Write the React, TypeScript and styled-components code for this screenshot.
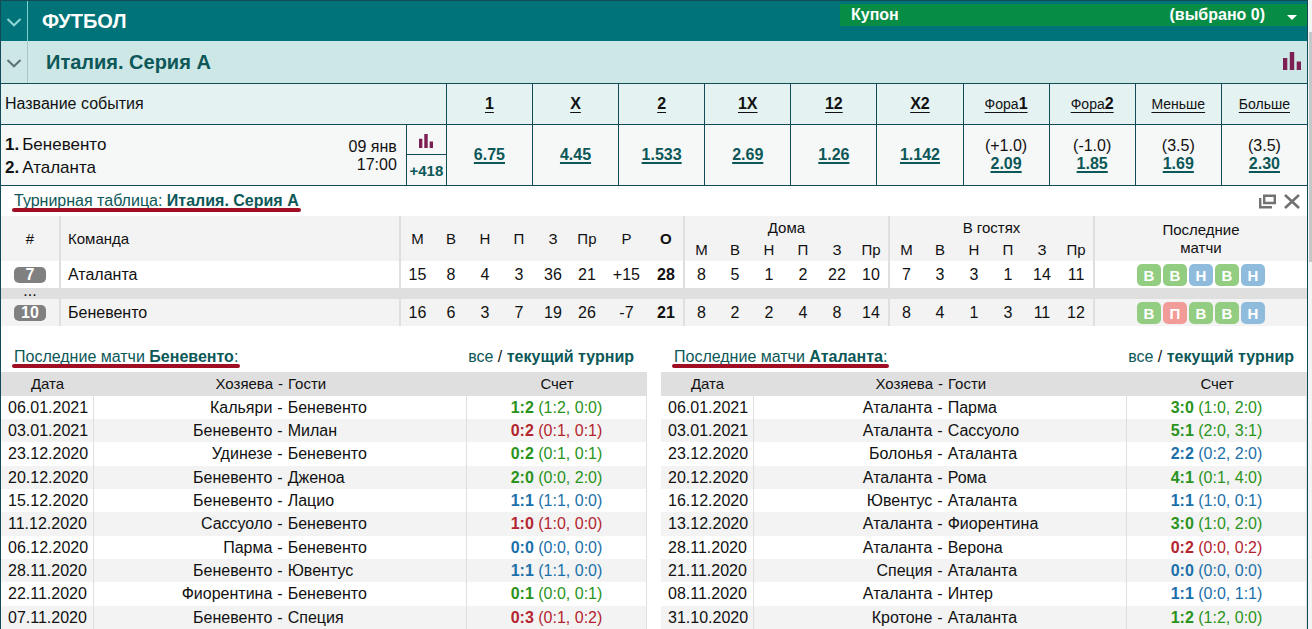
import React from "react";
import styled, { createGlobalStyle } from "styled-components";

const c = {
  line: "#124a58",
  head: "#007378",
  league: "#cde6e6",
  pale: "#e4f2f2",
  teal: "#0c5757",
  plum: "#7c1f52",
  stripe: "#f3f3f3",
  band: "#dfdfdf",
  win: "#2a931c",
  loss: "#b3252f",
  draw: "#1b70a9",
  mark: "#a00e24",
};

const GlobalStyle = createGlobalStyle`
  *, *::before, *::after { box-sizing: border-box; }
  body {
    margin: 0;
    background: #fff;
    color: #111;
    font: 16px/18px "Liberation Sans", Arial, sans-serif;
  }
  button {
    font: inherit;
    color: inherit;
    background: none;
    border: 0;
    padding: 0;
    cursor: pointer;
  }
  a { color: inherit; text-decoration: none; }
  h1, h2, h3 { margin: 0; font-size: inherit; font-weight: normal; }
  svg { display: block; }
`;

const Page = styled.div`
  display: flex;
  min-height: 100vh;
`;

const Frame = styled.main`
  flex: 1;
  min-width: 0;
  border: solid ${c.line};
  border-width: 1px 1px 0 1px;
`;

const ScrollTrack = styled.div`
  width: 4px;
  padding: 32px 0 0 1px;
  background: #f1f5f5;
`;

const ScrollThumb = styled.div`
  height: 230px;
  background: #c3c9c9;
`;

const SportBar = styled.header`
  display: flex;
  height: 40px;
  background: ${c.head};
  color: #fff;
`;

const LeagueBar = styled.div`
  display: flex;
  align-items: center;
  height: 43px;
  background: ${c.league};
  border-bottom: 1px solid ${c.line};
  color: ${c.plum};
`;

const Toggle = styled.button<{ $edge: string; $ink: string }>`
  && {
    display: flex;
    align-items: center;
    justify-content: center;
    align-self: stretch;
    width: 27px;
    padding-top: 3px;
    border-right: 1px solid ${(p) => p.$edge};
    color: ${(p) => p.$ink};
  }
`;

const SportTitle = styled.h1`
  && {
    flex: 1;
    padding-left: 14px;
    font-size: 20px;
    font-weight: bold;
    line-height: 40px;
  }
`;

const LeagueTitle = styled.h2`
  && {
    flex: 1;
    padding-left: 18px;
    font-size: 20px;
    font-weight: bold;
    line-height: 42px;
    color: ${c.teal};
  }
`;

const LeagueStats = styled.button`
  && { padding: 0 6px 2px 0; }
`;

const Coupon = styled.button`
  && {
    display: flex;
    align-items: center;
    align-self: flex-start;
    gap: 22px;
    width: 467px;
    height: 22px;
    margin-top: 3px;
    padding: 0 10px 0 11px;
    background: #078c45;
    font-weight: bold;
  }
  svg { margin-top: 4px; }
`;

const CouponName = styled.span`
  flex: 1;
  text-align: left;
`;

const OddsTable = styled.table`
  width: 100%;
  table-layout: fixed;
  border-spacing: 0;
  text-align: center;
  th, td {
    padding: 0;
    border-bottom: 1px solid ${c.line};
  }
  th + th, td + td { border-left: 1px solid ${c.line}; }
  th { height: 41px; background: ${c.pale}; font-weight: normal; }
  td { height: 61px; background: #f6f7f7; }
  th:first-child { padding-left: 4px; text-align: left; }
`;

const Col = styled.col<{ $w: string }>`
  width: ${(p) => p.$w};
`;

const SortLink = styled.button`
  && {
    font-size: 14px;
    text-decoration: underline;
    text-underline-offset: 3px;
    b { font-size: 16px; }
  }
`;

const EventCell = styled.div`
  display: flex;
  align-items: center;
  justify-content: space-between;
  padding: 2px 9px 0 4px;
`;

const Team = styled.div`
  display: flex;
  gap: 3px;
  font-size: 17px;
  line-height: 23px;
`;

const When = styled.div`
  text-align: right;
`;

const MoreCell = styled.div`
  display: grid;
  grid-template-rows: 30px 30px;
`;

const StatsButton = styled.button`
  && {
    display: flex;
    align-items: center;
    justify-content: center;
    padding-top: 3px;
    border-bottom: 1px solid ${c.line};
    color: ${c.plum};
  }
`;

const MoreLink = styled.a`
  && {
    font-size: 15px;
    font-weight: bold;
    line-height: 32px;
    color: ${c.teal};
  }
`;

const OddLink = styled.a`
  && {
    font-weight: bold;
    color: ${c.teal};
    text-decoration: underline 2px;
    text-underline-offset: 2px;
  }
`;

const PanelHead = styled.div`
  display: flex;
  align-items: center;
  height: 30px;
  padding: 0 7px 0 13px;
`;

const Marked = styled.h3`
  && {
    position: relative;
    margin-right: auto;
    color: ${c.teal};
  }
  &::after {
    content: "";
    position: absolute;
    left: -2px;
    right: -2px;
    bottom: -2px;
    height: 4px;
    border-radius: 2px;
    background: ${c.mark};
  }
`;

const Tools = styled.div`
  display: flex;
  gap: 8px;
  color: #727272;
`;

const Standings = styled.table`
  width: 100%;
  table-layout: fixed;
  border-spacing: 0;
  text-align: center;
  th, td { padding: 0; }
  th { font-size: 15px; font-weight: normal; }
`;

const HeadRow = styled.tr<{ $h: number }>`
  height: ${(p) => p.$h}px;
  background: ${c.stripe};
`;

const TeamRow = styled.tr<{ $shade?: boolean }>`
  height: 27px;
  background: ${(p) => (p.$shade ? c.stripe : "#fff")};
`;

const GapRow = styled.tr`
  height: 11px;
  background: ${c.band};
  line-height: 6px;
  vertical-align: top;
`;

const Th = styled.th<{ $rule?: boolean; $left?: boolean }>`
  border-left: ${(p) => (p.$rule ? `2px solid ${c.band}` : "0")};
  ${(p) => p.$left && "&&& { padding-left: 7px; text-align: left; }"}
`;

const Td = styled.td<{ $rule?: boolean; $left?: boolean }>`
  border-left: ${(p) => (p.$rule ? `2px solid ${c.band}` : "0")};
  ${(p) => p.$left && "&&& { padding-left: 7px; text-align: left; }"}
`;

const Rank = styled.span`
  display: block;
  width: 32px;
  height: 16px;
  margin: 0 auto;
  border-radius: 5px;
  background: #808080;
  color: #fff;
  font-weight: bold;
  line-height: 16px;
`;

const Form = styled.div`
  display: flex;
  justify-content: center;
  gap: 2px;
`;

const formColor: Record<string, string> = { В: "#93cd82", Н: "#8fbbdd", П: "#f19c98" };

const FormBadge = styled.span<{ $r: string }>`
  width: 24px;
  height: 22px;
  border-radius: 5px;
  background: ${(p) => formColor[p.$r]};
  color: #fff;
  font-size: 15px;
  font-weight: bold;
  line-height: 23px;
`;

const Columns = styled.div`
  display: grid;
  grid-template-columns: 1fr 1fr;
  gap: 14px;
  padding-top: 16px;
`;

const Filter = styled.nav`
  padding-right: 6px;
  a { color: ${c.teal}; }
`;

const Matches = styled.table`
  width: 100%;
  table-layout: fixed;
  border-spacing: 0;
  th, td { padding: 0; }
  thead tr { height: 24px; background: ${c.band}; }
  th { font-size: 15px; font-weight: normal; }
  tbody tr { height: 23px; }
  tbody tr:nth-child(3n) { height: 24px; }
  tbody tr:nth-child(even) { background: ${c.stripe}; }
  td { border-right: 1px solid ${c.band}; }
  td:first-child { padding-left: 7px; }
`;

const Pair = styled.div`
  display: grid;
  grid-template-columns: 1fr auto 1fr;
  gap: 5px;
  > :first-child { text-align: right; }
  > :last-child { text-align: left; }
`;

const Score = styled.div<{ $tone: Tone }>`
  text-align: center;
  color: ${(p) => c[p.$tone]};
`;

type Tone = "win" | "loss" | "draw";
type Match = [string, string, string, string, string, Tone];

const Chevron = () => (
  <svg width="16" height="9" viewBox="0 0 16 9" fill="none" stroke="currentColor" strokeWidth="2" aria-hidden="true">
    <path d="M1.5 1 8 7.3 14.5 1" />
  </svg>
);

const Bars = ({ size }: { size: number }) => (
  <svg width={size} height={size} viewBox="0 0 18 18" fill="currentColor" aria-hidden="true">
    <path d="M0 6h4.3v12H0zM6.8 0h4.4v18H6.8zM13.7 9.5H18V18h-4.3z" />
  </svg>
);

const odds: { key: string; head: React.ReactNode; line?: string; value: string }[] = [
  { key: "1", head: <b>1</b>, value: "6.75" },
  { key: "X", head: <b>X</b>, value: "4.45" },
  { key: "2", head: <b>2</b>, value: "1.533" },
  { key: "1X", head: <b>1X</b>, value: "2.69" },
  { key: "12", head: <b>12</b>, value: "1.26" },
  { key: "X2", head: <b>X2</b>, value: "1.142" },
  { key: "h1", head: <>Фора<b>1</b></>, line: "(+1.0)", value: "2.09" },
  { key: "h2", head: <>Фора<b>2</b></>, line: "(-1.0)", value: "1.85" },
  { key: "under", head: "Меньше", line: "(3.5)", value: "1.69" },
  { key: "over", head: "Больше", line: "(3.5)", value: "2.30" },
];

const totalCols = ["М", "В", "Н", "П", "З", "Пр", "Р", "О"];
const sideCols = ["М", "В", "Н", "П", "З", "Пр"];

const table = [
  {
    rank: 7,
    team: "Аталанта",
    total: ["15", "8", "4", "3", "36", "21", "+15", "28"],
    home: [8, 5, 1, 2, 22, 10],
    away: [7, 3, 3, 1, 14, 11],
    form: "ВВНВН",
  },
  {
    rank: 10,
    team: "Беневенто",
    total: ["16", "6", "3", "7", "19", "26", "-7", "21"],
    home: [8, 2, 2, 4, 8, 14],
    away: [8, 4, 1, 3, 11, 12],
    form: "ВПВВН",
  },
];

const benevento: Match[] = [
  ["06.01.2021", "Кальяри", "Беневенто", "1:2", "(1:2, 0:0)", "win"],
  ["03.01.2021", "Беневенто", "Милан", "0:2", "(0:1, 0:1)", "loss"],
  ["23.12.2020", "Удинезе", "Беневенто", "0:2", "(0:1, 0:1)", "win"],
  ["20.12.2020", "Беневенто", "Дженоа", "2:0", "(0:0, 2:0)", "win"],
  ["15.12.2020", "Беневенто", "Лацио", "1:1", "(1:1, 0:0)", "draw"],
  ["11.12.2020", "Сассуоло", "Беневенто", "1:0", "(1:0, 0:0)", "loss"],
  ["06.12.2020", "Парма", "Беневенто", "0:0", "(0:0, 0:0)", "draw"],
  ["28.11.2020", "Беневенто", "Ювентус", "1:1", "(1:1, 0:0)", "draw"],
  ["22.11.2020", "Фиорентина", "Беневенто", "0:1", "(0:0, 0:1)", "win"],
  ["07.11.2020", "Беневенто", "Специя", "0:3", "(0:1, 0:2)", "loss"],
];

const atalanta: Match[] = [
  ["06.01.2021", "Аталанта", "Парма", "3:0", "(1:0, 2:0)", "win"],
  ["03.01.2021", "Аталанта", "Сассуоло", "5:1", "(2:0, 3:1)", "win"],
  ["23.12.2020", "Болонья", "Аталанта", "2:2", "(0:2, 2:0)", "draw"],
  ["20.12.2020", "Аталанта", "Рома", "4:1", "(0:1, 4:0)", "win"],
  ["16.12.2020", "Ювентус", "Аталанта", "1:1", "(1:0, 0:1)", "draw"],
  ["13.12.2020", "Аталанта", "Фиорентина", "3:0", "(1:0, 2:0)", "win"],
  ["28.11.2020", "Аталанта", "Верона", "0:2", "(0:0, 0:2)", "loss"],
  ["21.11.2020", "Специя", "Аталанта", "0:0", "(0:0, 0:0)", "draw"],
  ["08.11.2020", "Аталанта", "Интер", "1:1", "(0:0, 1:1)", "draw"],
  ["31.10.2020", "Кротоне", "Аталанта", "1:2", "(1:2, 0:0)", "win"],
];

const LastMatches = ({ team, matches }: { team: string; matches: Match[] }) => (
  <section>
    <PanelHead>
      <Marked>
        Последние матчи <b>{team}</b>:
      </Marked>
      <Filter>
        <a href="#all">все</a> / <a href="#current"><b>текущий турнир</b></a>
      </Filter>
    </PanelHead>
    <Matches>
      <colgroup>
        <Col $w="93px" />
        <Col $w="auto" />
        <Col $w="180px" />
      </colgroup>
      <thead>
        <tr>
          <th>Дата</th>
          <th>
            <Pair><span>Хозяева</span><span>-</span><span>Гости</span></Pair>
          </th>
          <th>Счет</th>
        </tr>
      </thead>
      <tbody>
        {matches.map(([date, home, away, score, halves, tone]) => (
          <tr key={date}>
            <td>{date}</td>
            <td>
              <Pair><span>{home}</span><span>-</span><span>{away}</span></Pair>
            </td>
            <td>
              <Score $tone={tone}><b>{score}</b> {halves}</Score>
            </td>
          </tr>
        ))}
      </tbody>
    </Matches>
  </section>
);

export default function App() {
  return (
    <Page>
      <GlobalStyle />
      <Frame>
        <SportBar>
          <Toggle $edge="#7fd0d0" $ink="#8fd6d6" aria-label="Свернуть"><Chevron /></Toggle>
          <SportTitle>ФУТБОЛ</SportTitle>
          <Coupon>
            <CouponName>Купон</CouponName>
            <span>(выбрано 0)</span>
            <svg width="10" height="5" viewBox="0 0 10 5" fill="currentColor" aria-hidden="true">
              <path d="M0 0h10L5 5z" />
            </svg>
          </Coupon>
        </SportBar>

        <LeagueBar>
          <Toggle $edge="#a9c6c8" $ink="#5d7376" aria-label="Свернуть"><Chevron /></Toggle>
          <LeagueTitle>Италия. Серия А</LeagueTitle>
          <LeagueStats aria-label="Статистика"><Bars size={18} /></LeagueStats>
        </LeagueBar>

        <OddsTable>
          <colgroup>
            <Col $w="31%" />
            <Col $w="40px" />
            {odds.map((o) => <Col key={o.key} $w="auto" />)}
          </colgroup>
          <thead>
            <tr>
              <th colSpan={2}>Название события</th>
              {odds.map((o) => <th key={o.key}><SortLink>{o.head}</SortLink></th>)}
            </tr>
          </thead>
          <tbody>
            <tr>
              <td>
                <EventCell>
                  <div>
                    <Team><b>1.</b><span>Беневенто</span></Team>
                    <Team><b>2.</b><span>Аталанта</span></Team>
                  </div>
                  <When>09 янв<br />17:00</When>
                </EventCell>
              </td>
              <td>
                <MoreCell>
                  <StatsButton aria-label="Статистика"><Bars size={14} /></StatsButton>
                  <MoreLink href="#more">+418</MoreLink>
                </MoreCell>
              </td>
              {odds.map((o) => (
                <td key={o.key}>
                  {o.line && <div>{o.line}</div>}
                  <OddLink href={`#${o.key}`}>{o.value}</OddLink>
                </td>
              ))}
            </tr>
          </tbody>
        </OddsTable>

        <PanelHead>
          <Marked>Турнирная таблица: <b>Италия. Серия А</b></Marked>
          <Tools>
            <button aria-label="Открыть в окне">
              <svg width="17" height="15" viewBox="0 0 17 15" fill="none" stroke="currentColor" strokeWidth="2.4" aria-hidden="true">
                <path d="M5.2 1.7h10.600v7.300H5.200z" />
                <path d="M1.200 4v9.300H13" />
              </svg>
            </button>
            <button aria-label="Закрыть">
              <svg width="16" height="15" viewBox="0 0 16 15" fill="none" stroke="currentColor" strokeWidth="2.6" aria-hidden="true">
                <path d="M1 1l14 13M15 1 1 14" />
              </svg>
            </button>
          </Tools>
        </PanelHead>

        <Standings>
          <colgroup>
            <Col $w="58px" />
            <Col $w="auto" />
            {totalCols.map((k, i) => <Col key={k} $w={i === 0 ? "35px" : k === "Р" ? "45px" : "34px"} />)}
            {sideCols.map((k, i) => <Col key={k} $w={i === 0 ? "35px" : "34px"} />)}
            {sideCols.map((k, i) => <Col key={k} $w={i === 0 ? "35px" : "34px"} />)}
            <Col $w="214px" />
          </colgroup>
          <thead>
            <HeadRow $h={23}>
              <Th rowSpan={2}>#</Th>
              <Th rowSpan={2} $rule $left>Команда</Th>
              {totalCols.map((k, i) => (
                <Th key={k} rowSpan={2} $rule={i === 0}>{k === "О" ? <b>{k}</b> : k}</Th>
              ))}
              <Th colSpan={6} $rule>Дома</Th>
              <Th colSpan={6} $rule>В гостях</Th>
              <Th rowSpan={2} $rule>Последние<br />матчи</Th>
            </HeadRow>
            <HeadRow $h={22}>
              {sideCols.map((k, i) => <Th key={k} $rule={i === 0}>{k}</Th>)}
              {sideCols.map((k, i) => <Th key={k} $rule={i === 0}>{k}</Th>)}
            </HeadRow>
          </thead>
          <tbody>
            {table.map((t, n) => (
              <React.Fragment key={t.team}>
                {n > 0 && (
                  <GapRow>
                    <td>...</td>
                    <td colSpan={22} />
                  </GapRow>
                )}
                <TeamRow $shade={n > 0}>
                  <Td><Rank>{t.rank}</Rank></Td>
                  <Td $rule $left>{t.team}</Td>
                  {t.total.map((v, i) => <Td key={i} $rule={i === 0}>{i === 7 ? <b>{v}</b> : v}</Td>)}
                  {t.home.map((v, i) => <Td key={i} $rule={i === 0}>{v}</Td>)}
                  {t.away.map((v, i) => <Td key={i} $rule={i === 0}>{v}</Td>)}
                  <Td $rule>
                    <Form>
                      {t.form.split("").map((r, i) => <FormBadge key={i} $r={r}>{r}</FormBadge>)}
                    </Form>
                  </Td>
                </TeamRow>
              </React.Fragment>
            ))}
          </tbody>
        </Standings>

        <Columns>
          <LastMatches team="Беневенто" matches={benevento} />
          <LastMatches team="Аталанта" matches={atalanta} />
        </Columns>
      </Frame>
      <ScrollTrack>
        <ScrollThumb />
      </ScrollTrack>
    </Page>
  );
}
